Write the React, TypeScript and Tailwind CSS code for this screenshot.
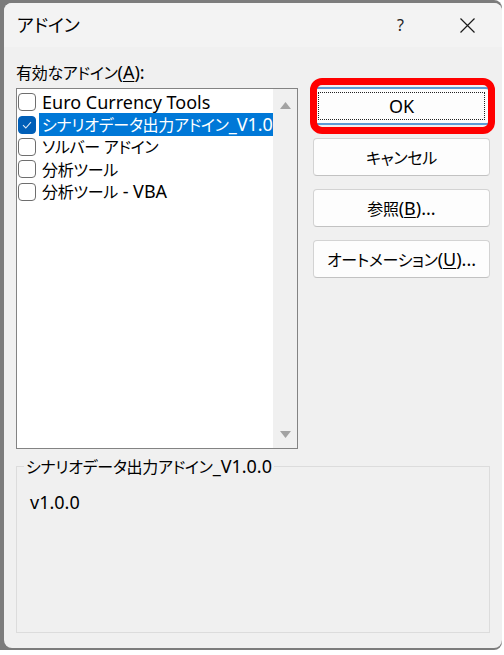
import React from "react";

const FONT = "'Noto Sans', 'Noto Sans CJK JP', sans-serif";

function J({ children }: { children: React.ReactNode }) {
  return <span className="text-[16px] tracking-[-0.3px]">{children}</span>;
}

function Checkbox({ checked }: { checked?: boolean }) {
  return checked ? (
    <div className="w-[18px] h-[18px] rounded-[4px] bg-[#005fb8] border border-[#005fb8] flex items-center justify-center shrink-0">
      <svg width="12" height="10" viewBox="0 0 12 10">
        <polyline points="2,5.2 4.8,8 10,2.2" fill="none" stroke="#dfe9f5" strokeWidth="1.1" />
      </svg>
    </div>
  ) : (
    <div className="w-[18px] h-[18px] rounded-[4px] bg-white border border-[#6e6e6e] shrink-0" />
  );
}

function Row({ children, checked, selected }: { children: React.ReactNode; checked?: boolean; selected?: boolean }) {
  return (
    <div className="h-[22.4px] flex items-center pl-[1px]">
      <Checkbox checked={checked} />
      <div
        className={
          "ml-[3px] h-full flex items-center pl-[3px] pr-[2px] whitespace-nowrap " +
          (selected ? "bg-[#0078d7] text-white" : "text-black")
        }
      >
        <span>{children}</span>
      </div>
    </div>
  );
}

function Btn({ children, primary }: { children: React.ReactNode; primary?: boolean }) {
  if (primary) {
    return (
      <div className="relative h-[38px]">
        <div className="h-full rounded-[4px] bg-[#fdfdfd] border border-[#d0d0d0] border-t-2 border-b-2 border-t-[#5d9bd6] border-b-[#5d9bd6] flex items-center justify-center px-[4px] pt-[3px] pb-[3px]">
          <div className="w-full h-full border border-dotted border-[#222] flex items-center justify-center">
            {children}
          </div>
        </div>
        <div className="absolute left-[-3px] right-[-5px] top-[-9px] bottom-[-9px] border-[7px] border-[#ff0000] rounded-[12px] pointer-events-none" />
      </div>
    );
  }
  return (
    <div className="h-[38px] rounded-[4px] bg-[#fdfdfd] border border-[#d3d3d3] border-b-[#c2c2c2] flex items-center justify-center">
      <span>{children}</span>
    </div>
  );
}

export default function App() {
  return (
    <div
      className="w-[504px] h-[655px] bg-white text-black [font-feature-settings:'palt']"
      style={{ fontFamily: FONT }}
    >
      <div className="w-[502px] h-[650px] bg-[#7c7c7c] pt-[3px] pl-[4px] pb-[2px] rounded-tr-[8px] rounded-br-[8px]">
        <div className="h-full bg-[#f0f0f0] rounded-[8px] flex flex-col overflow-hidden">
          {/* Title bar */}
          <div className="h-[44px] bg-[#f3f3f3] flex items-center pl-[13px] pr-[27px] shrink-0">
            <span className="text-[18px] leading-[20px]">アドイン</span>
            <span className="ml-auto text-[16px] leading-[20px] text-[#222]">?</span>
            <svg className="ml-[56px]" width="15" height="15" viewBox="0 0 15 15">
              <path d="M0.5 0.5 L14.5 14.5 M14.5 0.5 L0.5 14.5" stroke="#1a1a1a" strokeWidth="1.2" />
            </svg>
          </div>

          {/* Body */}
          <div className="flex-1 px-[12px] pt-[15px] pb-[15px] flex flex-col text-[18px] leading-[20px]">
            <div className="flex gap-[15px]">
              <div className="w-[282px] shrink-0">
                <div className="h-[20px] whitespace-nowrap">
                  <J>有効なアドイン</J>(<span className="underline underline-offset-2">A</span>):
                </div>
                <div className="mt-[6px] h-[361px] border border-[#838383] bg-white flex">
                  <div className="flex-1 min-w-0 overflow-hidden pt-[2px]">
                    <Row>Euro Currency Tools</Row>
                    <Row checked selected>
                      <J>シナリオデータ出力アドイン</J>_V1.0.0
                    </Row>
                    <Row>
                      <J>ソルバー アドイン</J>
                    </Row>
                    <Row>
                      <J>分析ツール</J>
                    </Row>
                    <Row>
                      <J>分析ツール</J> - VBA
                    </Row>
                  </div>
                  <div className="w-[24px] bg-[#f0f0f0] flex flex-col justify-between items-center pt-[13px] pb-[10px]">
                    <svg width="11" height="7" viewBox="0 0 11 7">
                      <polygon points="5.5,0 11,7 0,7" fill="#a3a3a3" />
                    </svg>
                    <svg width="11" height="7" viewBox="0 0 11 7">
                      <polygon points="0,0 11,0 5.5,7" fill="#a3a3a3" />
                    </svg>
                  </div>
                </div>
              </div>
              <div className="flex-1 pt-[25px] flex flex-col gap-[13px]">
                <Btn primary>OK</Btn>
                <Btn>
                  <J>キャンセル</J>
                </Btn>
                <Btn>
                  <J>参照</J>(<span className="underline underline-offset-2">B</span>)...
                </Btn>
                <Btn>
                  <J>オートメーション</J>(<span className="underline underline-offset-2">U</span>)...
                </Btn>
              </div>
            </div>

            <fieldset className="mt-[7px] flex-1 border border-[#dcdcdc] min-w-0">
              <legend className="ml-[7px] px-[2px] text-[18px] leading-[20px]">
                <J>シナリオデータ出力アドイン</J>_V1.0.0
              </legend>
              <div className="pl-[13px] pt-[15px] text-[18px] leading-[20px]">v1.0.0</div>
            </fieldset>
          </div>
        </div>
      </div>
    </div>
  );
}
